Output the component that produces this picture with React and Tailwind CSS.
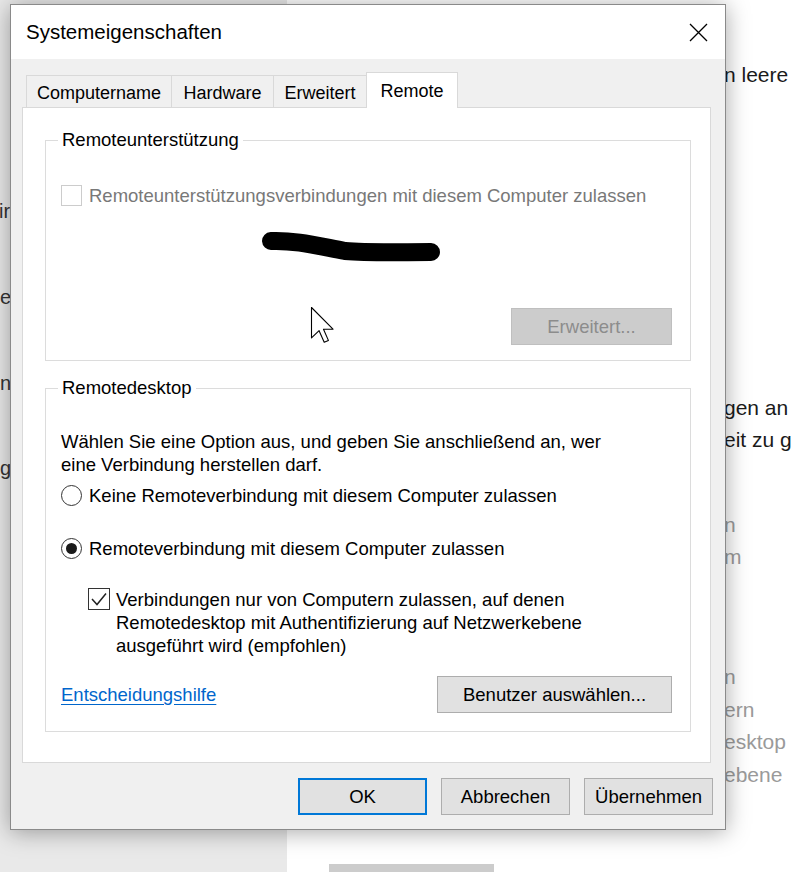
export default function App() {
  const btn =
    "h-[37px] w-[129px] flex items-center justify-center bg-[#e1e1e1] border border-[#adadad] text-[18.5px] text-black";
  return (
    <div className="relative w-[791px] h-[872px] overflow-hidden flex font-['Liberation_Sans',Arial,sans-serif] text-black">
      {/* background: left settings pane */}
      <div className="w-[287px] shrink-0 bg-[#e9e9e9] flex flex-col pt-[195px] text-[20px] leading-[32px] text-[#333]">
        <span className="-ml-[1px]">ir</span>
        <span className="mt-[54px]">e</span>
        <span className="mt-[54px]">n</span>
        <span className="mt-[53px]">g</span>
      </div>
      {/* background: right settings pane */}
      <div className="flex-1 bg-white flex flex-col pt-[59px] text-[21px] leading-[32px] whitespace-nowrap">
        <span className="ml-[437px] text-[#1a1a1a]">n leere</span>
        <span className="ml-[437px] mt-[301px] text-[#1a1a1a]">gen an</span>
        <span className="ml-[437px] text-[#1a1a1a]">
          eit zu <span className="underline">g</span>
        </span>
        <span className="ml-[437px] mt-[53px] text-[#9a9a9a]">n</span>
        <span className="ml-[437px] text-[#9a9a9a]">m</span>
        <span className="ml-[437px] mt-[88px] text-[#9a9a9a]">n</span>
        <span className="ml-[437px] mt-[1px] text-[#9a9a9a]">ern</span>
        <span className="ml-[437px] text-[#9a9a9a]">esktop</span>
        <span className="ml-[437px] mt-[1px] text-[#9a9a9a]">ebene</span>
        <div className="ml-[42px] mt-[73px] w-[165px] h-[20px] bg-[#cccccc] shrink-0" />
      </div>

      {/* dialog window */}
      <div className="absolute left-[10px] top-[4px] w-[716px] h-[826px] border border-[#8a8a8a] bg-[#f0f0f0] shadow-[0_2px_22px_rgba(0,0,0,0.35)] flex flex-col text-[18.5px]">
        {/* title bar */}
        <div className="h-[54px] shrink-0 bg-white flex items-center justify-between pl-[15px] pr-[17px]">
          <span className="text-[20.5px] leading-[24px]">Systemeigenschaften</span>
          <svg width="19" height="19" viewBox="0 0 19 19">
            <path d="M1 1 L18 18 M18 1 L1 18" stroke="#000" strokeWidth="1.3" fill="none" />
          </svg>
        </div>
        {/* body */}
        <div className="flex-1 flex flex-col pl-[11px] pr-[12px] pt-[13px]">
          {/* tabs */}
          <div className="relative z-10 flex items-end h-[36px] -mb-[1px] ml-[4px] text-[18px] leading-[22px] whitespace-nowrap">
            <div className="w-[146px] h-[32px] mb-[1px] border-t border-l border-r border-[#d9d9d9] flex items-center justify-center pt-[2px]">
              Computername
            </div>
            <div className="w-[102px] h-[32px] mb-[1px] border-t border-r border-[#d9d9d9] flex items-center justify-center pt-[2px]">
              Hardware
            </div>
            <div className="w-[92px] h-[32px] mb-[1px] border-t border-[#d9d9d9] flex items-center justify-center pt-[2px]">
              Erweitert
            </div>
            <div className="w-[92px] h-[36px] border-t border-l border-r border-[#d9d9d9] bg-white flex items-center justify-center">
              Remote
            </div>
          </div>
          {/* tab panel */}
          <div className="w-[689px] h-[656px] shrink-0 border border-[#d9d9d9] bg-white flex flex-col pl-[22px] pt-[32px] leading-[23px] whitespace-nowrap">
            {/* Remoteunterstützung */}
            <div className="relative w-[646px] h-[221px] shrink-0 border border-[#dcdcdc] flex flex-col pt-[43px]">
              <span className="absolute left-[12px] -top-[12px] px-[4px] bg-white leading-[22px]">
                Remoteunterstützung
              </span>
              <div className="flex items-center gap-[7px] pl-[15px] h-[22px]">
                <div className="w-[21px] h-[21px] border border-[#cccccc] bg-white" />
                <span className="text-[#787878]">
                  Remoteunterstützungsverbindungen mit diesem Computer zulassen
                </span>
              </div>
              <div className="mt-auto self-end mr-[18px] mb-[15px] w-[161px] h-[37px] bg-[#cccccc] border border-[#bfbfbf] flex items-center justify-center text-[#8c8c8c]">
                Erweitert...
              </div>
            </div>
            {/* Remotedesktop */}
            <div className="relative mt-[27px] w-[646px] h-[344px] shrink-0 border border-[#dcdcdc] flex flex-col pt-[41px]">
              <span className="absolute left-[12px] -top-[12px] px-[4px] bg-white leading-[22px]">
                Remotedesktop
              </span>
              <p className="pl-[15px]">
                Wählen Sie eine Option aus, und geben Sie anschließend an, wer
                <br />
                eine Verbindung herstellen darf.
              </p>
              <div className="mt-[8px] pl-[15px] flex items-center gap-[7px] h-[23px]">
                <div className="w-[21px] h-[21px] rounded-full border border-[#333] bg-white" />
                <span>Keine Remoteverbindung mit diesem Computer zulassen</span>
              </div>
              <div className="mt-[30px] pl-[15px] flex items-center gap-[7px] h-[23px]">
                <div className="w-[21px] h-[21px] rounded-full border border-[#333] bg-white flex items-center justify-center">
                  <div className="w-[11px] h-[11px] rounded-full bg-[#1a1a1a]" />
                </div>
                <span>Remoteverbindung mit diesem Computer zulassen</span>
              </div>
              <div className="mt-[28px] pl-[42px] flex items-start gap-[6px]">
                <div className="w-[22px] h-[22px] shrink-0 border border-[#333] bg-white">
                  <svg width="20" height="20" viewBox="0 0 20 20">
                    <path d="M3 10 L8 15.5 L17 4.5" stroke="#222" strokeWidth="1.5" fill="none" />
                  </svg>
                </div>
                <span>
                  Verbindungen nur von Computern zulassen, auf denen
                  <br />
                  Remotedesktop mit Authentifizierung auf Netzwerkebene
                  <br />
                  ausgeführt wird (empfohlen)
                </span>
              </div>
              <div className="mt-[19px] pl-[15px] pr-[18px] flex items-center justify-between h-[37px]">
                <span className="text-[#0066cc] underline underline-offset-[3px]">Entscheidungshilfe</span>
                <div className="w-[235px] h-[37px] bg-[#e1e1e1] border border-[#adadad] flex items-center justify-center">
                  Benutzer auswählen...
                </div>
              </div>
            </div>
          </div>
          {/* dialog buttons */}
          <div className="mt-[15px] flex justify-end gap-[14px]">
            <div className="h-[37px] w-[129px] flex items-center justify-center bg-[#e1e1e1] border-2 border-[#0078d7] text-[18.5px]">
              OK
            </div>
            <div className={btn}>Abbrechen</div>
            <div className={btn}>Übernehmen</div>
          </div>
        </div>
      </div>

      {/* scribble and mouse cursor drawn over the dialog */}
      <svg className="absolute left-0 top-0 pointer-events-none" width="791" height="872" viewBox="0 0 791 872">
        <path
          d="M271 241 C 295 240, 318 246, 345 251 C 370 253, 400 252, 431 252"
          stroke="#000"
          strokeWidth="18"
          strokeLinecap="round"
          fill="none"
        />
        <path
          d="M311.5 307.5 L311.5 337.9 L319.1 330.7 L324.2 342.2 L328.4 340.4 L323.5 329.2 L333 329.2 Z"
          fill="#fff"
          stroke="#000"
          strokeWidth="1.1"
          strokeLinejoin="round"
        />
      </svg>
    </div>
  );
}
